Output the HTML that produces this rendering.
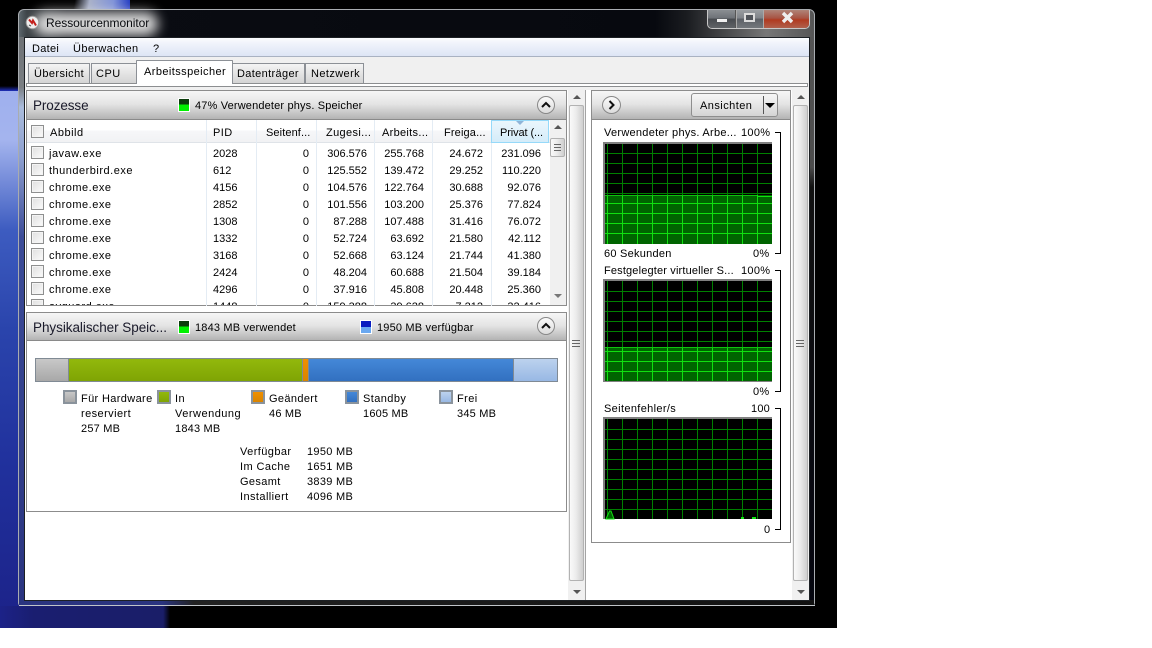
<!DOCTYPE html>
<html><head><meta charset="utf-8"><title>Ressourcenmonitor</title>
<style>
html,body{margin:0;padding:0;background:#fff;}
#p{position:relative;width:1152px;height:648px;overflow:hidden;background:#fff;font:11px "Liberation Sans",sans-serif;color:#000;}
#p div,#p span,#p svg{position:absolute;}
.t{letter-spacing:.5px;white-space:nowrap;line-height:14px;margin-top:1px;}
.n{white-space:nowrap;line-height:14px;margin-top:1px;}
.r{position:absolute;left:0;width:540px;height:17px;}
.r b{position:absolute;font-weight:normal;top:1px;line-height:14px;white-space:nowrap;}
.r .a{left:49px;letter-spacing:.5px;}
.r .pid{left:213px;}
.r .c3,.r .c4,.r .c5,.r .c6,.r .c7{text-align:right;width:60px;}
.r .c3{left:249px}.r .c4{left:307px}.r .c5{left:364px}.r .c6{left:423px}.r .c7{left:481px}
.cb{width:11px;height:11px;border:1px solid #8e8f8f;background:linear-gradient(135deg,#dfdfdf,#fbfbfb);outline:1px solid #f4f4f4;outline-offset:-2px;}
.hd{background:linear-gradient(#f6f6f6,#e4e4e4 45%,#b0b0b0);}
.th{background:linear-gradient(90deg,#fafafa,#ececec 45%,#cfcfcf);border:1px solid #b2b2b2;border-radius:2px;box-sizing:border-box;}
.lg{width:14px;height:14px;box-sizing:border-box;border:2px solid #8a939c;}
</style></head><body><div id="p">

<!-- desktop background -->
<div style="left:0;top:0;width:837px;height:628px;background:#000"></div>
<div style="left:72px;top:0;width:58px;height:9px;background:linear-gradient(100deg,#000 5%,#a8b0c8 30%,#7f92d8 70%,#1a34c0)"></div>
<div style="left:0;top:90px;width:20px;height:538px;background:linear-gradient(#9fb0ee 0,#a4b4ee 50px,#3d5cc0 140px,#2a44ac 240px,#20309c 380px,#1c2288 538px)"></div>
<div style="left:0;top:86px;width:18px;height:5px;background:linear-gradient(#000,#2030c0)"></div>
<div style="left:0;top:606px;width:170px;height:22px;background:linear-gradient(90deg,#1c2288,#1a1e70 20%,#1a1e68 96%,#000)"></div>
<div style="left:815px;top:300px;width:22px;height:328px;background:#000"></div>

<!-- window frame -->
<div style="left:18px;top:9px;width:797px;height:597px;box-sizing:border-box;border-radius:6px 6px 3px 3px;border:1px solid #a8acb0;background:linear-gradient(90deg,#5e686e 0,#3a4044 1%,#0a0c12 6%,#07090f 80%,#1a1c20 84%,#777 94%,#555 100%)"></div>
<div style="left:19px;top:37px;width:6px;height:568px;background:linear-gradient(#6e7276,#7a7e82 50px,#aabcdc 70px,#8ea0d0 120px,#3c4c98 200px,#2a3480 100%)"></div>
<div style="left:809px;top:37px;width:5px;height:568px;background:linear-gradient(#555,#4c4c4c 130px,#111 150px,#04050f 100%)"></div>
<div style="left:19px;top:600px;width:795px;height:5px;background:linear-gradient(90deg,#2a3480,#2a3480 18%,#222 22%,#111)"></div>
<div style="left:19px;top:605px;width:796px;height:1px;background:#c0c4c8"></div>
<div style="left:34px;top:12px;width:124px;height:24px;border-radius:12px;background:#e4e4e4;filter:blur(6px);opacity:.95"></div>
<div style="left:24px;top:37px;width:786px;height:564px;box-sizing:border-box;border:1px solid #1c2024;background:#fff"></div>

<!-- title -->
<svg style="left:25px;top:15px" width="15" height="15" viewBox="0 0 15 15"><circle cx="7.5" cy="7.5" r="6.3" fill="#eee" stroke="#999"/><path d="M4 4.5 L7 8 L8 5.5 L11 10.5" fill="none" stroke="#c4201c" stroke-width="2"/><path d="M4 10 L6 11" stroke="#555" stroke-width="1"/></svg>
<div class="n" style="left:46px;top:16px;margin-top:0;font-size:12px;letter-spacing:-.05px;color:#0a0c10">Ressourcenmonitor</div>

<!-- window controls -->
<div style="left:707px;top:10px;width:103px;height:19px;box-sizing:border-box;border:1px solid #c8c8c8;border-top:0;border-radius:0 0 5px 5px;overflow:hidden;background:#555">
 <div style="left:0;top:0;width:27px;height:18px;background:linear-gradient(#8a8e92,#6e7278 45%,#484b50 50%,#606367)"></div>
 <div style="left:28px;top:0;width:26px;height:18px;background:linear-gradient(#989ca0,#80848a 45%,#5c6066 50%,#74787c);border-left:1px solid #aaa"></div>
 <div style="left:55px;top:0;width:47px;height:18px;background:linear-gradient(#b08478,#a85444 45%,#b03a20 55%,#b0604c);border-left:1px solid #aaa"></div>
</div>
<div style="left:717px;top:19px;width:10px;height:3px;background:#f0f0f0"></div>
<div style="left:744px;top:13px;width:11px;height:9px;box-sizing:border-box;border:2px solid #dcdcdc;background:#50545a"></div>
<svg style="left:780px;top:11px" width="15" height="13" viewBox="0 0 15 13"><path d="M3 2 L12 11 M12 2 L3 11" stroke="#eee" stroke-width="3.4"/></svg>

<!-- menu -->
<div style="left:25px;top:38px;width:784px;height:18px;background:linear-gradient(#fbfcfe,#f0f3fb 30%,#dde5f5);border-bottom:1px solid #a9b2c2"></div>
<div class="t" style="left:32px;top:41px;letter-spacing:.3px">Datei</div>
<div class="t" style="left:73px;top:41px;letter-spacing:.38px">Überwachen</div>
<div class="t" style="left:153px;top:41px">?</div>

<!-- tab area -->
<div style="left:25px;top:57px;width:784px;height:33px;background:#f0f0f0"></div>
<div style="left:26px;top:83px;width:782px;height:4px;box-sizing:border-box;border:1px solid #8c8e90;background:#fff"></div>
<div style="left:28px;top:63px;width:62px;height:20px;box-sizing:border-box;border:1px solid #8c9096;border-bottom:0;background:linear-gradient(#f4f4f4,#e4e4e4 50%,#d4d4d4)"></div>
<div style="left:91px;top:63px;width:46px;height:20px;box-sizing:border-box;border:1px solid #8c9096;border-bottom:0;background:linear-gradient(#f4f4f4,#e4e4e4 50%,#d4d4d4)"></div>
<div style="left:232px;top:63px;width:73px;height:20px;box-sizing:border-box;border:1px solid #8c9096;border-bottom:0;background:linear-gradient(#f4f4f4,#e4e4e4 50%,#d4d4d4)"></div>
<div style="left:305px;top:63px;width:59px;height:20px;box-sizing:border-box;border:1px solid #8c9096;border-bottom:0;background:linear-gradient(#f4f4f4,#e4e4e4 50%,#d4d4d4)"></div>
<div style="left:136px;top:60px;width:97px;height:24px;box-sizing:border-box;border:1px solid #8c9096;border-bottom:0;background:#fff;border-radius:1px 1px 0 0"></div>
<div class="t" style="left:34px;top:66px;letter-spacing:.4px">Übersicht</div>
<div class="t" style="left:96px;top:66px;letter-spacing:.5px">CPU</div>
<div class="t" style="left:144px;top:64px;letter-spacing:.42px">Arbeitsspeicher</div>
<div class="t" style="left:237px;top:66px;letter-spacing:.35px">Datenträger</div>
<div class="t" style="left:311px;top:66px;letter-spacing:.4px">Netzwerk</div>

<!-- left main scrollbar -->
<div style="left:568px;top:90px;width:17px;height:510px;background:#f0f0f0"></div>
<div style="left:585px;top:90px;width:1px;height:510px;background:#a4a4a4"></div>
<div class="th" style="left:569px;top:105px;width:15px;height:476px"></div>
<div style="left:572px;top:340px;width:8px;height:7px;border-top:1px solid #666;border-bottom:1px solid #666;box-sizing:border-box"></div>
<div style="left:572px;top:343px;width:8px;height:1px;background:#666"></div>
<div style="left:573px;top:95px;width:0;height:0;border:4px solid transparent;border-top:0;border-bottom:4px solid #555"></div>
<div style="left:573px;top:590px;width:0;height:0;border:4px solid transparent;border-bottom:0;border-top:4px solid #555"></div>

<!-- right main scrollbar -->
<div style="left:792px;top:90px;width:17px;height:510px;background:#f0f0f0"></div>
<div class="th" style="left:793px;top:105px;width:15px;height:476px"></div>
<div style="left:796px;top:340px;width:8px;height:7px;border-top:1px solid #666;border-bottom:1px solid #666;box-sizing:border-box"></div>
<div style="left:796px;top:343px;width:8px;height:1px;background:#666"></div>
<div style="left:797px;top:95px;width:0;height:0;border:4px solid transparent;border-top:0;border-bottom:4px solid #555"></div>
<div style="left:797px;top:590px;width:0;height:0;border:4px solid transparent;border-bottom:0;border-top:4px solid #555"></div>

<!-- Prozesse section -->
<div style="left:26px;top:90px;width:541px;height:216px;box-sizing:border-box;border:1px solid #8c8c8c;background:#fff"></div>
<div class="hd" style="left:27px;top:91px;width:539px;height:29px"></div>
<div style="left:27px;top:119px;width:539px;height:1px;background:#8a8a8a"></div>
<div class="n" style="left:33px;top:97px;margin-top:0;font-size:13.5px;line-height:17px;letter-spacing:-.1px;color:#1a1a2a">Prozesse</div>
<div style="left:178px;top:98px;width:12px;height:14px;box-sizing:border-box;border:1px solid #fff;background:linear-gradient(#0c3c0c 0,#0c3c0c 45%,#00f000 45%)"></div>
<div class="t" style="left:195px;top:98px;letter-spacing:.16px">47% Verwendeter phys. Speicher</div>
<div style="left:537px;top:96px;width:18px;height:18px;box-sizing:border-box;border:1px solid #888;border-radius:50%;background:linear-gradient(#fafafa,#dcdcdc)"></div>
<svg style="left:541px;top:101px" width="10" height="8" viewBox="0 0 10 8"><path d="M1 6 L5 2 L9 6" fill="none" stroke="#111" stroke-width="2"/></svg>

<!-- column header -->
<div style="left:27px;top:120px;width:523px;height:23px;background:linear-gradient(#fff 0,#fff 45%,#f6f7f9 50%,#f1f2f4);border-bottom:1px solid #dfe3e8;box-sizing:border-box"></div>
<div style="left:491px;top:120px;width:58px;height:23px;box-sizing:border-box;border:1px solid #96d9f9;background:linear-gradient(#eaf6fc,#e0f1fb 50%,#d4ecf9)"></div>
<div style="left:516px;top:121px;width:0;height:0;border:4px solid transparent;border-bottom:0;border-top:4px solid #8fb4d8"></div>
<div style="left:206px;top:120px;width:1px;height:186px;background:#e4ecf4"></div>
<div style="left:256px;top:120px;width:1px;height:186px;background:#e4ecf4"></div>
<div style="left:316px;top:120px;width:1px;height:186px;background:#e4ecf4"></div>
<div style="left:374px;top:120px;width:1px;height:186px;background:#e4ecf4"></div>
<div style="left:432px;top:120px;width:1px;height:186px;background:#e4ecf4"></div>
<div style="left:491px;top:143px;width:1px;height:163px;background:#e4ecf4"></div>
<div class="cb" style="left:31px;top:125px"></div>
<div class="t" style="left:50px;top:125px;letter-spacing:.5px">Abbild</div>
<div class="t" style="left:213px;top:125px;letter-spacing:.4px">PID</div>
<div class="t" style="left:266px;top:125px;letter-spacing:.1px">Seitenf...</div>
<div class="t" style="left:326px;top:125px;letter-spacing:.35px">Zugesi...</div>
<div class="t" style="left:382px;top:125px;letter-spacing:.3px">Arbeits...</div>
<div class="t" style="left:444px;top:125px;letter-spacing:.15px">Freiga...</div>
<div class="t" style="left:500px;top:125px;letter-spacing:-.1px">Privat (...</div>

<!-- rows -->
<div style="left:0;top:146px;width:550px;height:159px;overflow:hidden">
<div class="r" style="top:0"><span class="cb" style="left:31px;top:0"></span><b class="a">javaw.exe</b><b class="pid">2028</b><b class="c3">0</b><b class="c4">306.576</b><b class="c5">255.768</b><b class="c6">24.672</b><b class="c7">231.096</b></div>
<div class="r" style="top:17px"><span class="cb" style="left:31px;top:0"></span><b class="a">thunderbird.exe</b><b class="pid">612</b><b class="c3">0</b><b class="c4">125.552</b><b class="c5">139.472</b><b class="c6">29.252</b><b class="c7">110.220</b></div>
<div class="r" style="top:34px"><span class="cb" style="left:31px;top:0"></span><b class="a">chrome.exe</b><b class="pid">4156</b><b class="c3">0</b><b class="c4">104.576</b><b class="c5">122.764</b><b class="c6">30.688</b><b class="c7">92.076</b></div>
<div class="r" style="top:51px"><span class="cb" style="left:31px;top:0"></span><b class="a">chrome.exe</b><b class="pid">2852</b><b class="c3">0</b><b class="c4">101.556</b><b class="c5">103.200</b><b class="c6">25.376</b><b class="c7">77.824</b></div>
<div class="r" style="top:68px"><span class="cb" style="left:31px;top:0"></span><b class="a">chrome.exe</b><b class="pid">1308</b><b class="c3">0</b><b class="c4">87.288</b><b class="c5">107.488</b><b class="c6">31.416</b><b class="c7">76.072</b></div>
<div class="r" style="top:85px"><span class="cb" style="left:31px;top:0"></span><b class="a">chrome.exe</b><b class="pid">1332</b><b class="c3">0</b><b class="c4">52.724</b><b class="c5">63.692</b><b class="c6">21.580</b><b class="c7">42.112</b></div>
<div class="r" style="top:102px"><span class="cb" style="left:31px;top:0"></span><b class="a">chrome.exe</b><b class="pid">3168</b><b class="c3">0</b><b class="c4">52.668</b><b class="c5">63.124</b><b class="c6">21.744</b><b class="c7">41.380</b></div>
<div class="r" style="top:119px"><span class="cb" style="left:31px;top:0"></span><b class="a">chrome.exe</b><b class="pid">2424</b><b class="c3">0</b><b class="c4">48.204</b><b class="c5">60.688</b><b class="c6">21.504</b><b class="c7">39.184</b></div>
<div class="r" style="top:136px"><span class="cb" style="left:31px;top:0"></span><b class="a">chrome.exe</b><b class="pid">4296</b><b class="c3">0</b><b class="c4">37.916</b><b class="c5">45.808</b><b class="c6">20.448</b><b class="c7">25.360</b></div>
<div class="r" style="top:153px"><span class="cb" style="left:31px;top:0"></span><b class="a">avguard.exe</b><b class="pid">1448</b><b class="c3">0</b><b class="c4">159.388</b><b class="c5">39.628</b><b class="c6">7.212</b><b class="c7">32.416</b></div>
</div>

<!-- list scrollbar -->
<div style="left:550px;top:120px;width:16px;height:185px;background:#f0f0f0"></div>
<div style="left:554px;top:125px;width:0;height:0;border:4px solid transparent;border-top:0;border-bottom:4px solid #555"></div>
<div style="left:554px;top:294px;width:0;height:0;border:4px solid transparent;border-bottom:0;border-top:4px solid #777"></div>
<div class="th" style="left:550px;top:138px;width:15px;height:19px"></div>
<div style="left:554px;top:144px;width:7px;height:7px;border-top:1px solid #666;border-bottom:1px solid #666;box-sizing:border-box"></div>
<div style="left:554px;top:147px;width:7px;height:1px;background:#666"></div>

<!-- Physikalischer section -->
<div style="left:26px;top:312px;width:541px;height:200px;box-sizing:border-box;border:1px solid #8c8c8c;background:#fff"></div>
<div class="hd" style="left:27px;top:313px;width:539px;height:28px"></div>
<div style="left:27px;top:340px;width:539px;height:1px;background:#8a8a8a"></div>
<div class="n" style="left:33px;top:319px;margin-top:0;font-size:13.5px;line-height:17px;letter-spacing:-.05px;color:#1a1a2a">Physikalischer Speic...</div>
<div style="left:178px;top:320px;width:12px;height:14px;box-sizing:border-box;border:1px solid #fff;background:linear-gradient(#0c3c0c 0,#0c3c0c 45%,#00f000 45%)"></div>
<div class="t" style="left:195px;top:320px;letter-spacing:.18px">1843 MB verwendet</div>
<div style="left:360px;top:320px;width:12px;height:14px;box-sizing:border-box;border:1px solid #fff;background:linear-gradient(#0a1cc0 0,#0a1cc0 50%,#6aa8f0 50%)"></div>
<div class="t" style="left:377px;top:320px;letter-spacing:.18px">1950 MB verfügbar</div>
<div style="left:537px;top:317px;width:18px;height:18px;box-sizing:border-box;border:1px solid #888;border-radius:50%;background:linear-gradient(#fafafa,#dcdcdc)"></div>
<svg style="left:541px;top:322px" width="10" height="8" viewBox="0 0 10 8"><path d="M1 6 L5 2 L9 6" fill="none" stroke="#111" stroke-width="2"/></svg>

<!-- memory bar -->
<div style="left:35px;top:358px;width:523px;height:24px;background:#808a94"></div>
<div style="left:36px;top:359px;width:32px;height:22px;background:linear-gradient(#c8c8c8,#a8a8a8)"></div>
<div style="left:69px;top:359px;width:233px;height:22px;background:linear-gradient(#92b80c,#7fa404)"></div>
<div style="left:303px;top:359px;width:5px;height:22px;background:linear-gradient(#f09000,#d88400)"></div>
<div style="left:309px;top:359px;width:204px;height:22px;background:linear-gradient(#4488d8,#3270c0)"></div>
<div style="left:514px;top:359px;width:43px;height:22px;background:linear-gradient(#bcd2ee,#98b8e4)"></div>

<!-- legend -->
<div class="lg" style="left:63px;top:390px;background:linear-gradient(#c8c8c8,#a8a8a8)"></div>
<div class="lg" style="left:157px;top:390px;background:linear-gradient(#92b80c,#7fa404)"></div>
<div class="lg" style="left:251px;top:390px;background:linear-gradient(#f09000,#d88400)"></div>
<div class="lg" style="left:345px;top:390px;background:linear-gradient(#4488d8,#3270c0)"></div>
<div class="lg" style="left:439px;top:390px;background:linear-gradient(#bcd2ee,#98b8e4)"></div>
<div class="t" style="left:81px;top:391px;letter-spacing:.36px">Für Hardware</div>
<div class="t" style="left:81px;top:406px;letter-spacing:.42px">reserviert</div>
<div class="n" style="left:81px;top:421px;letter-spacing:.2px">257 MB</div>
<div class="t" style="left:175px;top:391px">In</div>
<div class="t" style="left:175px;top:406px;letter-spacing:.5px">Verwendung</div>
<div class="n" style="left:175px;top:421px;letter-spacing:.2px">1843 MB</div>
<div class="t" style="left:269px;top:391px;letter-spacing:.36px">Geändert</div>
<div class="n" style="left:269px;top:406px;letter-spacing:.2px">46 MB</div>
<div class="t" style="left:363px;top:391px;letter-spacing:.42px">Standby</div>
<div class="n" style="left:363px;top:406px;letter-spacing:.2px">1605 MB</div>
<div class="t" style="left:457px;top:391px;letter-spacing:.42px">Frei</div>
<div class="n" style="left:457px;top:406px;letter-spacing:.2px">345 MB</div>

<!-- stats -->
<div class="t" style="left:240px;top:444px;letter-spacing:.42px">Verfügbar</div>
<div class="t" style="left:240px;top:459px;letter-spacing:.42px">Im Cache</div>
<div class="t" style="left:240px;top:474px;letter-spacing:.35px">Gesamt</div>
<div class="t" style="left:240px;top:489px;letter-spacing:.42px">Installiert</div>
<div class="n" style="left:307px;top:444px;letter-spacing:.3px">1950 MB</div>
<div class="n" style="left:307px;top:459px;letter-spacing:.3px">1651 MB</div>
<div class="n" style="left:307px;top:474px;letter-spacing:.3px">3839 MB</div>
<div class="n" style="left:307px;top:489px;letter-spacing:.3px">4096 MB</div>

<!-- right pane -->
<div style="left:591px;top:90px;width:200px;height:453px;box-sizing:border-box;border:1px solid #8c8c8c;background:#fff"></div>
<div class="hd" style="left:592px;top:91px;width:198px;height:29px"></div>
<div style="left:592px;top:119px;width:198px;height:1px;background:#8a8a8a"></div>
<div style="left:602px;top:96px;width:19px;height:18px;box-sizing:border-box;border:1px solid #888;border-radius:50%;background:linear-gradient(#fafafa,#dcdcdc)"></div>
<svg style="left:607px;top:100px" width="9" height="10" viewBox="0 0 9 10"><path d="M2.5 1 L6.5 5 L2.5 9" fill="none" stroke="#111" stroke-width="2"/></svg>
<div style="left:691px;top:93px;width:87px;height:24px;box-sizing:border-box;border:1px solid #8e8e8e;border-radius:3px;background:linear-gradient(#f6f6f6,#e8e8e8 45%,#d4d4d4)"></div>
<div style="left:763px;top:96px;width:1px;height:18px;background:#555"></div>
<div style="left:765px;top:103px;width:0;height:0;border:5px solid transparent;border-bottom:0;border-top:5px solid #000"></div>
<div class="t" style="left:700px;top:98px;letter-spacing:.45px">Ansichten</div>

<!-- graph labels -->
<div class="t" style="left:604px;top:125px;letter-spacing:.27px">Verwendeter phys. Arbe...</div>
<div class="n" style="left:741px;top:125px;letter-spacing:.3px">100%</div>
<div class="t" style="left:604px;top:246px;letter-spacing:.25px">60 Sekunden</div>
<div class="n" style="left:753px;top:246px;letter-spacing:.3px">0%</div>
<div class="t" style="left:604px;top:263px;letter-spacing:.16px">Festgelegter virtueller S...</div>
<div class="n" style="left:741px;top:263px;letter-spacing:.3px">100%</div>
<div class="n" style="left:753px;top:384px;letter-spacing:.3px">0%</div>
<div class="t" style="left:604px;top:401px;letter-spacing:.35px">Seitenfehler/s</div>
<div class="n" style="left:751px;top:401px;letter-spacing:.2px">100</div>
<div class="n" style="left:764px;top:522px">0</div>

<!-- brackets -->
<div style="left:775px;top:132px;width:6px;height:122px;box-sizing:border-box;border:1px solid #000;border-left:0"></div>
<div style="left:775px;top:270px;width:6px;height:122px;box-sizing:border-box;border:1px solid #000;border-left:0"></div>
<div style="left:775px;top:408px;width:6px;height:122px;box-sizing:border-box;border:1px solid #000;border-left:0"></div>

<!-- graphs -->
<svg style="left:0;top:0" width="1152" height="648" viewBox="0 0 1152 648" shape-rendering="crispEdges" fill="none">
<!-- graph 1 -->
<rect x="603" y="142" width="169" height="102" fill="#808080"/>
<rect x="605" y="144" width="167" height="51" fill="#000"/>
<rect x="605" y="195" width="167" height="49" fill="#006400"/>
<path stroke="#008000" d="M607.5 144v51M622.5 144v51M637.5 144v51M652.5 144v51M667.5 144v51M682.5 144v51M697.5 144v51M712.5 144v51M727.5 144v51M742.5 144v51M757.5 144v51M605 153.5h167M605 163.5h167M605 173.5h167M605 183.5h167M605 193.5h167"/>
<path stroke="#10e010" d="M607.5 195v49M622.5 195v49M637.5 195v49M652.5 195v49M667.5 195v49M682.5 195v49M697.5 195v49M712.5 195v49M727.5 195v49M742.5 195v49M757.5 195v49M605 203.5h167M605 213.5h167M605 223.5h167M605 233.5h167"/>
<path stroke="#10c010" d="M605 195.5h152"/>
<path stroke="#10e010" d="M757 196.5h15"/>
<!-- graph 2 -->
<rect x="603" y="279" width="169" height="103" fill="#808080"/>
<rect x="605" y="281" width="167" height="66" fill="#000"/>
<rect x="605" y="347" width="167" height="34" fill="#006400"/>
<path stroke="#008000" d="M607.5 281v66M622.5 281v66M637.5 281v66M652.5 281v66M667.5 281v66M682.5 281v66M697.5 281v66M712.5 281v66M727.5 281v66M742.5 281v66M757.5 281v66M605 291.5h167M605 301.5h167M605 311.5h167M605 321.5h167M605 331.5h167M605 341.5h167"/>
<path stroke="#10e010" d="M607.5 347v34M622.5 347v34M637.5 347v34M652.5 347v34M667.5 347v34M682.5 347v34M697.5 347v34M712.5 347v34M727.5 347v34M742.5 347v34M757.5 347v34M605 351.5h167M605 361.5h167M605 371.5h167"/>
<path stroke="#10c010" d="M605 347.5h167"/>
<!-- graph 3 -->
<rect x="603" y="417" width="169" height="102" fill="#808080"/>
<rect x="605" y="419" width="167" height="100" fill="#000"/>
<path stroke="#008000" d="M607.5 419v100M622.5 419v100M637.5 419v100M652.5 419v100M667.5 419v100M682.5 419v100M697.5 419v100M712.5 419v100M727.5 419v100M742.5 419v100M757.5 419v100M605 429.5h167M605 439.5h167M605 449.5h167M605 459.5h167M605 469.5h167M605 479.5h167M605 489.5h167M605 499.5h167M605 509.5h167"/>
<path shape-rendering="auto" d="M606 519 L609.5 511 L611 511 L614 519 Z" fill="#006400" stroke="#10e010"/>
<path stroke="#10e010" stroke-width="2" d="M741 518h3M752 518h4"/>
</svg>

</div></body></html>
